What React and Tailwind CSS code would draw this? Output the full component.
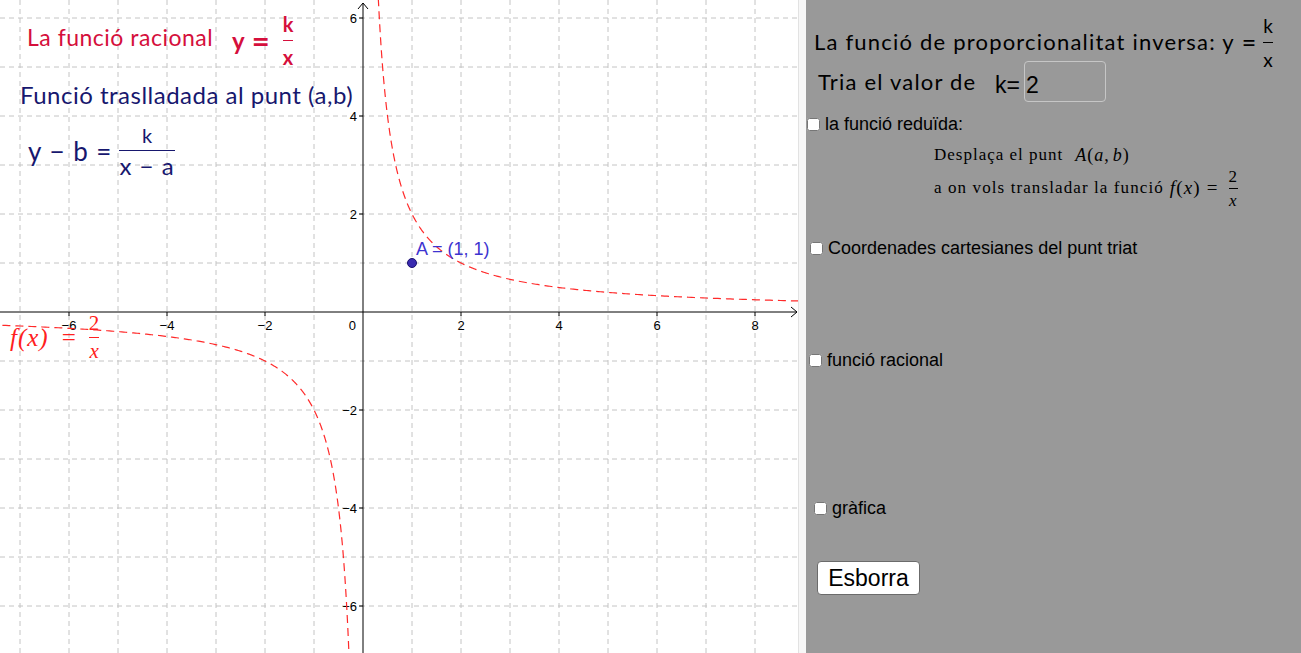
import React from "react";

const OX = 363;
const OY = 312;
const S = 49;

const px = (x) => OX + x * S;
const py = (y) => OY - y * S;

function branch(sign, a, b) {
  const pts = [];
  const n = 400;
  for (let i = 0; i <= n; i++) {
    const u = Math.log(a) + ((Math.log(b) - Math.log(a)) * i) / n;
    const x = sign * Math.exp(u);
    pts.push(`${px(x).toFixed(2)},${py(2 / x).toFixed(2)}`);
  }
  return "M" + pts.join(" L");
}

function Frac({ top, bottom, className, barClass, topClass = "", bottomClass = "" }) {
  return (
    <span className={"inline-flex flex-col items-center " + className}>
      <span className={"leading-none " + topClass}>{top}</span>
      <span className={"w-full h-px " + barClass} />
      <span className={"leading-none " + bottomClass}>{bottom}</span>
    </span>
  );
}

function Graph() {
  const vx = [];
  for (let k = -7; k <= 8; k++) if (k !== 0) vx.push(px(k));
  const hy = [];
  for (let k = -6; k <= 6; k++) if (k !== 0) hy.push(py(k));
  const xl = [-6, -4, -2, 2, 4, 6, 8];
  const yl = [6, 4, 2, -2, -4, -6];

  return (
    <svg width="798" height="653" className="absolute inset-0">
      {vx.map((x) => (
        <line key={"v" + x} x1={x} x2={x} y1="0" y2="653" stroke="#c4c4c4" strokeDasharray="5 4" />
      ))}
      {hy.map((y) => (
        <line key={"h" + y} x1="0" x2="798" y1={y} y2={y} stroke="#c4c4c4" strokeDasharray="5 4" />
      ))}
      <line x1="0" x2="797" y1={OY} y2={OY} stroke="#000" />
      <polyline points="791,307 797,312 791,317" fill="none" stroke="#000" />
      <line x1={OX} x2={OX} y1="3" y2="653" stroke="#000" />
      <polyline points="358,9 363,3 368,9" fill="none" stroke="#000" />
      {xl.map((v) => (
        <g key={"xl" + v}>
          <line x1={px(v)} x2={px(v)} y1={OY} y2={OY + 4} stroke="#000" />
          <text x={px(v)} y="330" textAnchor="middle" fontSize="13" fontFamily="Liberation Sans, sans-serif">
            {v < 0 ? "\u2212" + -v : v}
          </text>
        </g>
      ))}
      <text x="356" y="330" textAnchor="end" fontSize="13" fontFamily="Liberation Sans, sans-serif">0</text>
      {yl.map((v) => (
        <g key={"yl" + v}>
          <line x1={OX - 4} x2={OX} y1={py(v)} y2={py(v)} stroke="#000" />
          <text x="357" y={py(v) + 5} textAnchor="end" fontSize="13" fontFamily="Liberation Sans, sans-serif">
            {v < 0 ? "\u2212" + -v : v}
          </text>
        </g>
      ))}
      <path d={branch(1, 0.3, 9.2)} fill="none" stroke="#ff2a2a" strokeWidth="1.2" strokeDasharray="8 5" />
      <path d={branch(-1, 0.27, 7.6)} fill="none" stroke="#ff2a2a" strokeWidth="1.2" strokeDasharray="8 5" />
      <circle cx={px(1)} cy={py(1)} r="4.5" fill="#3a2bb0" stroke="#1a1070" strokeWidth="1" />
    </svg>
  );
}

export default function App() {
  return (
    <div className="flex w-[1301px] h-[653px] overflow-hidden bg-white">
      <div className="relative w-[798px] h-full shrink-0 bg-white">
        <Graph />

        <div className="absolute left-[27px] top-[26px] text-[23px] tracking-[0.5px] leading-none text-[#d50f3c] font-['Lato',sans-serif]">
          La funció racional
        </div>
        <div className="absolute left-[232px] top-[14px] h-[53px] flex items-center text-[#d50f3c] font-['Lato',sans-serif] font-bold">
          <span className="text-[24px] leading-none">y</span>
          <span className="text-[31px] leading-none ml-[7px]">=</span>
          <Frac
            top="k"
            bottom="x"
            className="text-[20px] ml-[12px] px-[1px]"
            barClass="bg-[#d50f3c] my-[6px]"
          />
        </div>

        <div className="absolute left-[20px] top-[83px] text-[24px] tracking-[0.5px] leading-none text-[#17176e] font-['Lato',sans-serif]">
          Funció traslladada al punt (a,b)
        </div>
        <div className="absolute left-[28px] top-[122px] h-[58px] flex items-center text-[#17176e] font-['Lato',sans-serif]">
          <span className="text-[26px] tracking-[1px] leading-none">y − b =</span>
          <Frac
            top="k"
            bottom="x − a"
            className="ml-[5px] px-[2px]"
            topClass="text-[20px] mb-[5px]"
            bottomClass="text-[24px] tracking-[1px] mt-[3px]"
            barClass="bg-[#17176e]"
          />
        </div>

        <div className="absolute left-[10px] top-[313px] h-[49px] flex items-center text-[#ff2020] font-['Liberation_Serif',serif]">
          <span className="italic text-[25px] tracking-[1px] leading-none">f(x)</span>
          <span className="text-[25px] leading-none ml-[13px]">=</span>
          <Frac
            top="2"
            bottom={<span className="italic">x</span>}
            className="text-[21px] ml-[12px] px-[1px]"
            barClass="bg-[#ff2020] my-[3px]"
          />
        </div>

        <div className="absolute left-[416px] top-[240px] text-[18px] leading-none text-[#3d34d0] font-['Liberation_Sans',sans-serif]">
          A = (1, 1)
        </div>
      </div>

      <div className="w-[8px] h-full shrink-0 bg-[#f7f7f7] border-l border-[#e2e2e2]" />

      <div className="flex-1 h-full bg-[#999999] flex flex-col text-black">
        <div className="mt-[15px] ml-[8px] h-[54px] flex items-center font-['Lato',sans-serif]">
          <span className="text-[22px] tracking-[1.2px] leading-none">La funció de proporcionalitat inversa: y</span>
          <span className="text-[25px] leading-none ml-[7px]">=</span>
          <Frac
            top="k"
            bottom="x"
            className="text-[19px] ml-[6px] px-[1px]"
            barClass="bg-black my-[7px]"
          />
        </div>

        <div className="mt-[-8px] ml-[12px] h-[41px] flex items-center">
          <span className="w-[177px] font-['Lato',sans-serif] text-[22px] tracking-[1.2px] leading-none">Tria el valor de</span>
          <span className="font-['Liberation_Sans',sans-serif] text-[23px] leading-none mt-[8px]">k=</span>
          <div className="ml-[4px] w-[82px] h-[41px] border border-[#c6c6c6] rounded-[4px] flex items-center pl-[1px] pt-[8px] font-['Liberation_Sans',sans-serif] text-[23px]">
            2
          </div>
        </div>

        <label className="mt-[12px] ml-[1px] h-[20px] flex items-center gap-[5px] font-['Liberation_Sans',sans-serif] text-[18px]">
          <input type="checkbox" className="m-0 w-[13px] h-[13px]" readOnly />
          <span className="leading-none">la funció reduïda:</span>
        </label>

        <div className="mt-[11px] ml-[128px] h-[20px] flex items-center font-['Liberation_Serif',serif] text-[17px] tracking-[1px]">
          <span>Desplaça el punt</span>
          <span className="ml-[12px] italic text-[18px]">A</span>
          <span className="text-[18px]">(</span>
          <span className="italic text-[18px]">a</span>
          <span className="text-[18px]">,</span>
          <span className="italic ml-[3px] text-[18px]">b</span>
          <span className="text-[18px]">)</span>
        </div>

        <div className="mt-[4px] ml-[128px] h-[38px] flex items-center font-['Liberation_Serif',serif] text-[17px] tracking-[1.1px]">
          <span>a on vols transladar la funció</span>
          <span className="ml-[6px] italic text-[19px]">f</span>
          <span className="text-[19px]">(</span>
          <span className="italic text-[19px]">x</span>
          <span className="text-[19px]">)</span>
          <span className="ml-[6px] text-[19px]">=</span>
          <Frac
            top="2"
            bottom={<span className="italic">x</span>}
            className="text-[17px] ml-[9px] px-[1px]"
            barClass="bg-black my-[3px]"
          />
        </div>

        <label className="mt-[31px] ml-[4px] h-[20px] flex items-center gap-[5px] font-['Liberation_Sans',sans-serif] text-[18px]">
          <input type="checkbox" className="m-0 w-[13px] h-[13px]" readOnly />
          <span className="leading-none">Coordenades cartesianes del punt triat</span>
        </label>

        <label className="mt-[92px] ml-[3px] h-[20px] flex items-center gap-[5px] font-['Liberation_Sans',sans-serif] text-[18px]">
          <input type="checkbox" className="m-0 w-[13px] h-[13px]" readOnly />
          <span className="leading-none">funció racional</span>
        </label>

        <label className="mt-[128px] ml-[8px] h-[20px] flex items-center gap-[5px] font-['Liberation_Sans',sans-serif] text-[18px]">
          <input type="checkbox" className="m-0 w-[13px] h-[13px]" readOnly />
          <span className="leading-none">gràfica</span>
        </label>

        <button className="mt-[43px] ml-[11px] w-[103px] h-[34px] bg-white border border-[#6b6b6b] rounded-[4px] font-['Liberation_Sans',sans-serif] text-[23px] leading-none text-black">
          Esborra
        </button>
      </div>
    </div>
  );
}
